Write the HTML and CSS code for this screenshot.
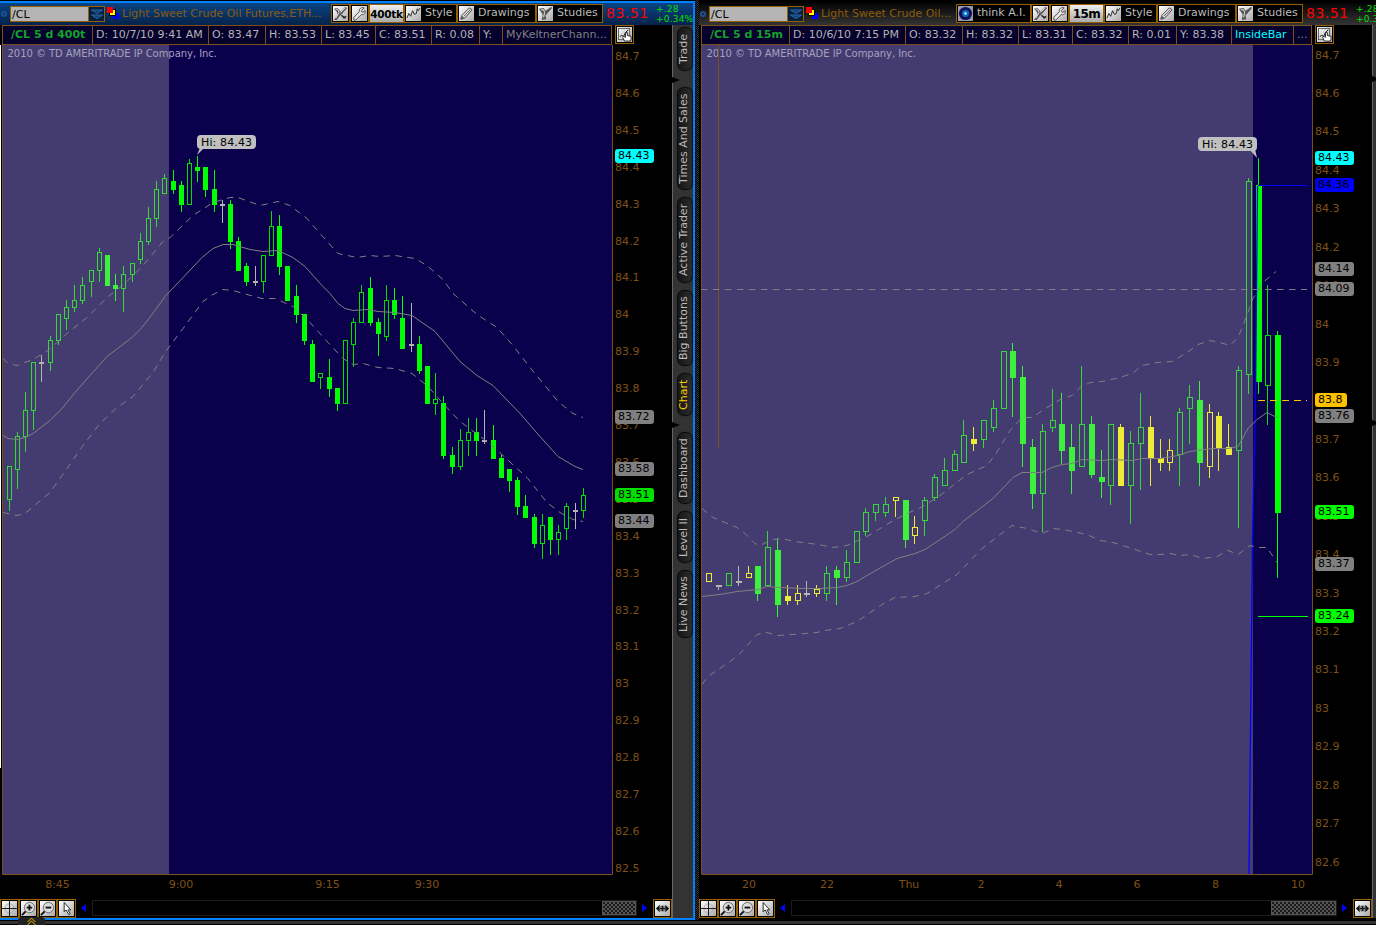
FILE: index.html
```html
<!DOCTYPE html>
<html lang="en">
<head>
    <meta charset="UTF-8">
    <title>Charts</title>
    <link rel="stylesheet" href="styles.css">
    <script src="main.js"></script>
</head>
<body onload="drawCharts()">

<svg class="symbols">
    <defs>
        <linearGradient id="silver" x1="0" y1="0" x2="1" y2="1">
            <stop offset="0" stop-color="#fff"/>
            <stop offset="1" stop-color="#aaa"/>
        </linearGradient>
        <symbol id="tools" viewBox="0 0 16 16">
            <rect width="16" height="16" fill="url(#silver)"/>
            <path d="M1 3l4-1 3 4 5-5 2 1-5 6-3 3-3 4-3 0 4-6-1-3z" fill="#555"/>
            <path d="M3 3.500l2 0 1.500 3.500-3.500 6M8 7l5-5" stroke="#e8e8e8" fill="none"/>
            <path d="M9 10l4 3M11 13l3-2" stroke="#222" stroke-width="1.500"/>
        </symbol>
        <symbol id="wrench" viewBox="0 0 16 16">
            <rect width="16" height="16" fill="url(#silver)"/>
            <path d="M2 12l6-6c-1-3 2-5 5-4l-3 3 1 2 3-2c1 3-2 5-4 4l-6 6-2 0z" fill="#e8e8e8" stroke="#444"/>
        </symbol>
        <symbol id="style" viewBox="0 0 16 16">
            <rect width="16" height="16" fill="url(#silver)"/>
            <path d="M1 13l2-5 2 3 2-6 2 4 2-1 1-5 1 2 2-3" fill="none" stroke="#222"/>
        </symbol>
        <symbol id="pencil" viewBox="0 0 16 16">
            <rect width="16" height="16" fill="url(#silver)"/>
            <path d="M2 14l1-4 8-8 3 2-8 9z" fill="#ddd" stroke="#444"/>
            <path d="M2 14l1-3 2 2zM5 11l7-7" fill="#222" stroke="#666"/>
        </symbol>
        <symbol id="studies" viewBox="0 0 16 16">
            <rect width="16" height="16" fill="url(#silver)"/>
            <path d="M1 3l5-1 2 3 6-4 1 1-5 6-2 2 1 4-5 1 1-6-2-3z" fill="#555"/>
            <path d="M3 4l3 0 1 3-1 5" stroke="#eee" fill="none"/>
        </symbol>
        <symbol id="hand" viewBox="0 0 16 16">
            <rect width="16" height="16" fill="url(#silver)"/>
            <rect x="1.500" y="1.500" width="12" height="12" fill="none" stroke="#555"/>
            <path d="M3 10l2-1 2 1 2-4 3-3" fill="none" stroke="#111"/>
            <path d="M8 15l-2-4 1-1 2 1 0-5 2 0 0 3 4 1 0 3-1 2z" fill="#fff" stroke="#222"/>
        </symbol>
        <symbol id="think" viewBox="0 0 16 16">
            <rect width="16" height="16" fill="#99a"/>
            <circle cx="8" cy="8" r="7" fill="#0a1460"/>
            <circle cx="8" cy="8" r="4.500" fill="#2858b8" stroke="#06093a"/>
            <circle cx="8" cy="8" r="1.500" fill="#5ff"/>
        </symbol>
        <symbol id="cross" viewBox="0 0 16 16">
            <rect width="16" height="16" fill="url(#silver)"/>
            <circle cx="8" cy="8" r="5" fill="none" stroke="#aaa"/>
            <path d="M0 8h16M8 0v16" stroke="#111"/>
        </symbol>
        <symbol id="zoomin" viewBox="0 0 16 16">
            <rect width="16" height="16" fill="url(#silver)"/>
            <circle cx="9" cy="7" r="5.500" fill="#ddd" stroke="#666"/>
            <path d="M1 15l4-4" stroke="#111" stroke-width="2"/>
            <path d="M6 7h6M9 4v6" stroke="#111" stroke-width="2"/>
        </symbol>
        <symbol id="zoomout" viewBox="0 0 16 16">
            <rect width="16" height="16" fill="url(#silver)"/>
            <circle cx="9" cy="7" r="5.500" fill="#ddd" stroke="#666"/>
            <path d="M1 15l4-4" stroke="#111" stroke-width="2"/>
            <path d="M6 7h6" stroke="#111" stroke-width="2"/>
        </symbol>
        <symbol id="arrow" viewBox="0 0 16 16">
            <rect width="16" height="16" fill="url(#silver)"/>
            <path d="M5.500 1.500v10l2-2 3 5 1.500-1-2.500-4h3z" fill="#fff" stroke="#222"/>
        </symbol>
        <symbol id="expand" viewBox="0 0 16 16">
            <rect width="16" height="16" fill="url(#silver)"/>
            <path d="M1 8l4-4v8zM15 8l-4-4v8z" fill="#111"/>
            <path d="M5 8h6M6.500 5v6M8 5v6M9.500 5v6" stroke="#111"/>
        </symbol>
        <symbol id="link" viewBox="0 0 12 12">
            <path d="M6 6h6v6h-6z" fill="#00f"/>
            <path d="M2.500 2.500h6v6h-6z" fill="#ff0" stroke="#000"/>
            <path d="M0 0h6v6h-6z" fill="#f00"/>
        </symbol>
        <symbol id="drop" viewBox="0 0 14 14">
            <path d="M2 3h11L7.500 6.500zM2 8h11L7.500 11.500z" fill="#123f72" stroke="#2a68a8"/>
        </symbol>
    </defs>
</svg>

<div class="desktop">
    <div class="window active">
        <div class="toolbar">
            <span class="dot"></span>
            <span class="symbol">/CL</span>
            <svg class="drop"><use href="#drop"/></svg>
            <svg class="link"><use href="#link"/></svg>
            <span class="name">Light Sweet Crude Oil Futures,ETH...</span>
            <svg class="icon"><use href="#tools"/></svg>
            <svg class="icon"><use href="#wrench"/></svg>
            <span class="period">400tk</span>
            <span class="button style"><svg><use href="#style"/></svg>Style</span>
            <span class="button drawings"><svg><use href="#pencil"/></svg>Drawings</span>
            <span class="button studies"><svg><use href="#studies"/></svg>Studies</span>
            <span class="last">83.51</span>
            <span class="change">+.28<br>+0.34%</span>
        </div>
        <div class="content">
            <div class="main">
                <div class="info">
                    <span class="cell title" style="width: 90px">/CL 5 d 400t</span>
                    <span class="cell" style="width: 116px">D: 10/7/10 9:41 AM</span>
                    <span class="cell" style="width: 57px">O: 83.47</span>
                    <span class="cell" style="width: 56px">H: 83.53</span>
                    <span class="cell" style="width: 54px">L: 83.45</span>
                    <span class="cell" style="width: 56px">C: 83.51</span>
                    <span class="cell" style="width: 48px">R: 0.08</span>
                    <span class="cell" style="width: 23px">Y:</span>
                    <span class="cell study" style="width: 110px">MyKeltnerChann...</span>
                    <svg class="hand"><use href="#hand"/></svg>
                </div>
                <svg class="chart" id="ticks" viewBox="0 45 672 853"></svg>
                <div class="scroll">
                    <svg class="tool"><use href="#cross"/></svg>
                    <svg class="tool"><use href="#zoomin"/></svg>
                    <svg class="tool"><use href="#zoomout"/></svg>
                    <svg class="tool"><use href="#arrow"/></svg>
                    <span class="left"></span>
                    <div class="track"><div class="thumb" style="width: 34px"></div></div>
                    <span class="right"></span>
                    <svg class="tool"><use href="#expand"/></svg>
                </div>
            </div>
            <div class="tabs">
                <div class="tab" style="height: 44px">Trade</div>
                <i class="notch"></i>
                <div class="tab" style="height: 103px">Times And Sales</div>
                <div class="tab" style="height: 86px">Active Trader</div>
                <div class="tab" style="height: 76px">Big Buttons</div>
                <div class="tab chosen" style="height: 43px">Chart</div>
                <i class="notch"></i>
                <div class="tab" style="height: 72px">Dashboard</div>
                <div class="tab" style="height: 52px">Level II</div>
                <div class="tab" style="height: 68px">Live News</div>
            </div>
        </div>
    </div>
    <div class="splitter"></div>
    <div class="window">
        <div class="toolbar">
            <span class="dot"></span>
            <span class="symbol">/CL</span>
            <svg class="drop"><use href="#drop"/></svg>
            <svg class="link"><use href="#link"/></svg>
            <span class="name">Light Sweet Crude Oil...</span>
            <span class="button ai"><svg><use href="#think"/></svg>think A.I.</span>
            <svg class="icon"><use href="#tools"/></svg>
            <svg class="icon"><use href="#wrench"/></svg>
            <span class="period wide">15m</span>
            <span class="button style"><svg><use href="#style"/></svg>Style</span>
            <span class="button drawings"><svg><use href="#pencil"/></svg>Drawings</span>
            <span class="button studies"><svg><use href="#studies"/></svg>Studies</span>
            <span class="last">83.51</span>
            <span class="change">+.28<br>+0.34%</span>
        </div>
        <div class="content">
            <div class="main">
                <div class="info">
                    <span class="cell title" style="width: 88px">/CL 5 d 15m</span>
                    <span class="cell" style="width: 116px">D: 10/6/10 7:15 PM</span>
                    <span class="cell" style="width: 57px">O: 83.32</span>
                    <span class="cell" style="width: 56px">H: 83.32</span>
                    <span class="cell" style="width: 54px">L: 83.31</span>
                    <span class="cell" style="width: 56px">C: 83.32</span>
                    <span class="cell" style="width: 48px">R: 0.01</span>
                    <span class="cell" style="width: 55px">Y: 83.38</span>
                    <span class="cell inside" style="width: 62px">InsideBar</span>
                    <span class="cell study" style="width: 19px">...</span>
                    <svg class="hand"><use href="#hand"/></svg>
                </div>
                <svg class="chart" id="minutes" viewBox="699 45 673 853"></svg>
                <div class="scroll">
                    <svg class="tool"><use href="#cross"/></svg>
                    <svg class="tool"><use href="#zoomin"/></svg>
                    <svg class="tool"><use href="#zoomout"/></svg>
                    <svg class="tool"><use href="#arrow"/></svg>
                    <span class="left"></span>
                    <div class="track"><div class="thumb" style="width: 65px"></div></div>
                    <span class="right"></span>
                    <svg class="tool"><use href="#expand"/></svg>
                </div>
            </div>
            <div class="tabs">
                <div class="spacer" style="height: 50px"></div>
                <i class="notch"></i>
                <div class="spacer" style="height: 335px"></div>
                <i class="notch"></i>
            </div>
        </div>
    </div>
</div>
<div class="footer"></div>
<div class="drawer"><svg viewBox="0 0 28 8"><path d="M10 5l4-4 4 4M10 8l4-4 4 4" fill="none" stroke="#fc0"/></svg></div>

</body>
</html>
```
FILE: styles.css
```css
body {
    margin: 0;
    width: 1376px;
    height: 925px;
    overflow: hidden;
    background: #000;
    color: #bbb;
    font: 11px "DejaVu Sans", sans-serif;
    white-space: nowrap;
}
.symbols {
    position: absolute;
    width: 0;
    height: 0;
}
.desktop {
    display: flex;
    height: 920px;
}
.window {
    box-sizing: border-box;
    width: 677px;
    flex: none;
    padding-top: 3px;
    overflow: hidden;
}
.window.active {
    width: 695px;
    margin-top: 1px;
    padding-top: 0;
    border: 2px solid #0080ff;
    border-left: 0;
    height: 919px;
}
.splitter {
    width: 4px;
    background: repeating-conic-gradient(#333 0 25%, #000 0 50%) 0 0 / 2px 2px;
}

/* toolbar */
.toolbar {
    box-sizing: border-box;
    display: flex;
    align-items: flex-start;
    width: 694px;
    height: 22px;
    padding-top: 1px;
    background: linear-gradient(#050505, #343434);
}
.active .toolbar {
    width: 693px;
    background: linear-gradient(#0a4484, #06234a);
}
.dot {
    box-sizing: border-box;
    flex: none;
    width: 6px;
    height: 6px;
    margin: 7px 3px 0 1px;
    border: 2px solid #1c4f8f;
    border-radius: 50%;
}
.symbol {
    box-sizing: border-box;
    flex: none;
    width: 79px;
    height: 16px;
    margin-top: 2px;
    padding-left: 1px;
    border: 1px solid #965f00;
    background: #b4b4b4;
    color: #000;
    line-height: 15px;
}
.drop {
    box-sizing: border-box;
    flex: none;
    width: 16px;
    height: 16px;
    margin: 2px 2px 0 0;
    border: 1px solid #965f00;
    border-left: 0;
    background: #06203e;
}
.link {
    flex: none;
    width: 12px;
    height: 12px;
    margin-top: 3px;
}
.name {
    flex: 1;
    padding-left: 3px;
    color: #8e5b0c;
    line-height: 19px;
}
.icon, .button, .period {
    box-sizing: border-box;
    flex: none;
    height: 19px;
    border: 1px solid #965f00;
    background: #000;
}
.icon {
    width: 19px;
    padding: 1px;
}
.period {
    width: 35px;
    background: linear-gradient(#eee, #aaa);
    color: #000;
    font-size: 10.5px;
    font-weight: bold;
    letter-spacing: -.3px;
    text-align: center;
    line-height: 18px;
}
.wide {
    font-size: 12px;
    letter-spacing: -.5px;
}
.button {
    display: flex;
    gap: 4px;
    padding-left: 1px;
    line-height: 15px;
}
.button svg {
    width: 15px;
    height: 15px;
    margin-top: 1px;
}
.style { width: 53px; }
.drawings { width: 79px; }
.studies { width: 67px; }
.ai { width: 75px; }
.last {
    flex: none;
    width: 50px;
    margin-left: 3px;
    color: #f00;
    font-size: 14px;
    line-height: 18px;
    letter-spacing: .5px;
}
.change {
    flex: none;
    width: 37px;
    color: #00e000;
    font-size: 9px;
    line-height: 10px;
    letter-spacing: .2px;
}

/* chart column */
.content {
    display: flex;
}
.main {
    width: 672px;
    flex: none;
}
.window:not(.active) .main {
    width: 673px;
}
.info {
    display: flex;
    height: 20px;
    padding-left: 2px;
}
.cell {
    box-sizing: border-box;
    height: 20px;
    padding-left: 3px;
    border: 1px solid #7a4f1c;
    border-right: 0;
    background: #05002c;
    color: #b4b4b4;
    line-height: 17px;
    overflow: hidden;
}
.title {
    padding-left: 8px;
    color: #15a02b;
    font-weight: bold;
}
.study {
    color: #808080;
}
.inside {
    color: #00ffff;
}
.hand {
    box-sizing: border-box;
    width: 19px;
    height: 19px;
    margin-left: 4px;
    padding: 1px;
    border: 1px solid #965f00;
}
.cell:nth-last-child(2) {
    border-right: 1px solid #7a4f1c;
    margin-right: -1px;
}
.chart {
    display: block;
    width: 100%;
    height: 853px;
}
.scroll {
    display: flex;
    align-items: center;
    height: 20px;
}
.tool {
    box-sizing: border-box;
    flex: none;
    width: 19px;
    height: 19px;
    padding: 1px;
    border: 1px solid #965f00;
}
.left, .right {
    border: 4px solid transparent;
}
.left {
    margin: 0 6px 0 1px;
    border-right: 5px solid #00f;
}
.right {
    margin: 0 2px 0 5px;
    border-left: 5px solid #00f;
}
.track {
    box-sizing: border-box;
    flex: 1;
    height: 16px;
    border: 1px solid #1c1c1c;
}
.thumb {
    box-sizing: border-box;
    height: 14px;
    margin-left: auto;
    border: 1px solid #555;
    background: repeating-conic-gradient(#555 0 25%, #1a1a1a 0 50%) 0 0 / 4px 4px;
}

/* chart svg */
.chart text { font-size: 11px; }
.axis { fill: #7f5119; }
.frame { fill: none; stroke: #7a4f1c; }
.copy { fill: #a6a1bd; }
.band { fill: none; stroke: #808080; }
.dashed { stroke-dasharray: 6.5 5.5; }

/* gadget tabs */
.tabs {
    box-sizing: border-box;
    width: 21px;
    height: 893px;
    padding: 2px 0 0 4px;
    border-left: 1px solid #666;
    background: #333;
    flex: none;
}
.tab {
    box-sizing: border-box;
    width: 16px;
    margin-bottom: 7px;
    border: 1px solid #0c0c0c;
    border-radius: 7px;
    background: linear-gradient(90deg, #2c2c2c, #161616);
    box-shadow: 0 0 1px #000;
    line-height: 12px;
    text-align: center;
    writing-mode: vertical-rl;
    transform: rotate(180deg);
}
.chosen {
    color: #fc0;
}
.notch {
    display: block;
    width: 0;
    margin: -1px 0 4px -5px;
    border: 3px solid transparent;
    border-left: 8px solid #000;
    border-right: 0;
}

.footer {
    height: 3px;
    margin-top: 1px;
    background: #333;
}
.drawer {
    position: absolute;
    left: 18px;
    top: 917px;
    width: 27px;
    height: 8px;
    border-radius: 4px 4px 0 0;
    background: #222;
}
.drawer svg {
    display: block;
    width: 27px;
    height: 8px;
}
```
FILE: main.js
```javascript
// candle: left, high, open/close top, open/close bottom, low, kind
// kinds: h hollow, f filled, d doji, y yellow hollow, Y yellow filled
let ticks = `7,466,466,500,511,h 15,432,436,470,489,h 23,392,410,437,452,h 31,362,362,411,430,h 39,355,362,364,382,d
48,336,340,363,371,h 56,314,314,341,345,h 64,300,307,319,330,h 72,285,300,308,312,h 80,277,285,301,304,h
89,270,270,282,297,h 97,248,252,271,282,h 105,255,255,286,286,f 113,274,285,289,301,f 121,266,274,289,312,h
130,263,263,275,282,h 138,233,241,260,264,h 146,207,218,242,245,h 154,181,189,219,227,h 162,174,178,194,194,h
171,170,181,190,194,f 179,181,185,205,212,f 187,159,163,205,205,h 195,156,167,171,182,f 203,167,167,190,197,f
212,170,189,205,212,f 220,200,204,206,223,d 228,200,204,242,249,f 236,237,241,271,271,f 244,263,266,282,286,f
253,266,281,283,286,d 261,255,255,282,293,h 269,211,226,256,256,h 277,215,226,267,275,f 285,266,266,301,301,f
294,285,296,315,323,f 302,314,314,341,345,f 310,340,344,382,382,f 318,373,373,378,389,h 327,359,377,389,397,f
335,388,388,404,411,f 343,340,340,404,404,h 351,318,322,345,367,h 359,285,292,323,323,h 368,277,288,323,326,f
376,318,322,334,356,f 384,285,300,337,341,h 392,288,300,315,319,f 400,296,318,349,349,f 409,303,344,346,352,d
417,336,344,371,374,f 425,366,366,404,404,f 433,373,399,404,415,h 441,396,403,456,459,f 450,447,455,467,474,f
458,429,440,467,470,h 466,418,432,441,456,h 474,418,432,441,456,f 482,410,440,442,444,d 491,425,440,459,459,f
499,455,458,478,478,f 507,469,469,481,492,f 515,477,480,507,515,f 523,495,506,518,518,f 532,514,517,544,548,f
540,514,525,544,559,h 548,517,517,540,555,f 556,525,532,540,555,h 564,503,506,529,540,h 573,503,510,512,529,d
581,488,495,511,518,h`;

let minutes = `706,573,573,582,582,y 716,585,585,587,590,d 726,573,573,586,586,h 736,566,581,583,586,d 746,566,573,578,578,y
755,566,566,594,601,f 765,531,547,586,586,h 775,539,550,605,617,f 785,585,596,601,605,Y 795,585,593,601,605,y
804,581,593,595,597,d 814,585,589,594,597,y 824,566,573,594,601,h 834,566,570,578,605,f 844,550,562,578,582,h
854,531,531,563,563,h 863,508,512,532,536,h 873,504,504,513,521,h 883,497,504,513,517,h 893,497,497,501,517,y
903,500,500,540,548,f 912,516,527,536,544,y 922,497,500,521,536,h 932,474,477,498,501,h 942,458,470,486,486,h
952,450,454,471,471,h 961,420,435,463,463,h 971,427,439,444,451,Y 981,420,420,440,448,h 991,400,408,428,432,h
1001,351,351,409,409,h 1010,343,351,378,417,f 1020,366,377,444,467,f 1030,439,447,494,509,f 1040,424,431,494,532,h
1050,389,420,428,432,h 1059,393,424,451,464,f 1069,424,447,471,494,f 1079,366,424,467,467,h 1089,416,424,475,478,f
1099,450,477,482,498,f 1108,424,424,486,505,h 1118,424,427,486,486,Y 1128,431,443,486,524,h 1138,393,427,444,490,h
1148,416,427,459,486,Y 1158,439,458,463,471,Y 1167,439,450,463,471,y 1177,408,412,455,486,h 1187,385,397,409,444,h
1197,381,400,463,486,f 1207,404,412,467,478,y 1216,412,416,449,471,Y 1226,424,447,455,455,Y 1236,366,370,451,528,h
1246,178,181,375,394,h 1256,158,185,382,394,f 1265,285,335,386,425,h 1275,331,335,513,578,f`;

let tickBands = [
	"3,358 8,363 17,365 33,359 48,350 67,333 87,317 107,297 125,283 143,265 163,241 170,237 193,215 213,202 230,197 238,197 260,205 278,201 290,205 307,218 320,233 338,253 357,257 370,255 380,256 395,255 415,258 427,265 443,279 453,293 477,314 497,327 513,345 530,367 558,401 573,413 583,417",
	"3,435 8,438 17,439 25,437 33,433 50,420 62,408 75,392 90,375 107,356 132,337 142,327 155,310 165,296 183,277 202,257 213,248 223,244 233,244 250,249 263,251 278,250 293,257 305,266 322,285 330,293 338,303 345,308 353,310 368,309 378,311 395,312 412,315 435,331 460,361 477,375 493,385 520,413 540,436 558,456 575,466 583,469",
	"3,512 17,515 25,513 50,492 67,468 83,445 100,423 117,407 133,396 153,372 165,352 183,328 203,301 213,294 223,289 233,290 247,294 262,298 275,298 293,306 310,322 328,342 343,358 353,364 363,363 378,367 395,368 412,373 428,386 443,403 460,421 487,441 503,455 517,468 527,477 547,502 560,512 573,519 583,521"
];

let minuteBands = [
	"702,508 713,517 737,527 745,533 755,543 760,545 772,539 780,538 795,541 818,544 833,547 847,545 867,536 890,522 907,513 923,506 940,495 967,474 987,465 996,453 1010,430 1022,417 1032,417 1047,407 1062,398 1072,395 1080,387 1090,382 1102,381 1120,377 1132,373 1142,365 1157,362 1172,361 1187,352 1198,344 1210,340 1220,342 1230,345 1238,337 1245,320 1253,298 1263,282 1276,271",
	"702,596 720,594 737,591 748,590 758,589 767,586 780,587 803,588 820,588 837,587 847,585 857,581 867,575 897,558 915,553 925,549 955,529 963,521 993,498 1013,477 1022,472 1042,472 1052,467 1062,464 1072,463 1082,459 1102,460 1112,459 1132,460 1142,458 1160,458 1178,455 1190,451 1212,448 1228,448 1238,446 1248,428 1257,419 1267,412 1277,417",
	"702,684 708,676 730,661 740,653 757,634 767,632 778,635 793,634 817,632 825,630 840,628 857,621 882,604 895,597 915,596 927,593 957,574 982,548 1012,525 1027,528 1042,533 1053,528 1063,529 1087,534 1100,540 1113,542 1132,548 1150,554 1160,554 1170,553 1180,555 1190,554 1203,558 1217,556 1228,550 1238,554 1250,545 1258,547 1267,547 1277,562"
];

function text(x, y, value, extra) {
	return `<text x="${x}" y="${y}" ${extra}>${value}</text>`;
}

function rect(x, y, w, h, fill) {
	return `<rect x="${x}" y="${y}" width="${w}" height="${h}" fill="${fill}"/>`;
}

function drawCandles(list, width, night) {
	let out = "";
	for (let item of list.split(/\s+/)) {
		let [x, high, top, bottom, low, kind] = item.split(",");
		x = +x; high = +high; top = +top; bottom = +bottom; low = +low;
		let dim = x < night;
		let color = dim ? "#3cf03c" : "#00ff00";
		if (kind === "h") color = dim ? "#36d838" : "#00e000";
		if (kind === "d") color = "#b4b4b4";
		if (kind === "y" || kind === "Y") color = "#ecec38";
		out += rect(x + 2, high, 1, top - high, color) + rect(x + 2, bottom, 1, low - bottom, color);
		if (kind === "h" || kind === "y") {
			out += `<rect x="${x + 0.5}" y="${top + 0.5}" width="${width - 1}" height="${bottom - top - 1}" fill="none" stroke="${color}"/>`;
		} else {
			out += rect(x, top, width, bottom - top, color);
		}
	}
	return out;
}

function drawBands(bands) {
	return bands.map((points, i) => `<polyline class="band ${i === 1 ? "" : "dashed"}" points="${points}" transform="translate(0 .5)"/>`).join("");
}

function drawBackground(left, split, right) {
	return rect(left, 45, split - left, 829, "#443c71") + rect(split, 45, right - split, 829, "#0a004c") +
		`<path class="frame" d="M${left - 0.5} 45V874.500H${right + 0.5}V45"/>`;
}

function drawPrices(x, y, step, last) {
	let out = "";
	for (let i = 0, p = 847; p >= last; p--, i++) {
		out += text(x, Math.round(y + i * step) + 4, p / 10, 'class="axis"');
	}
	return out;
}

function drawTimes(times) {
	return times.map(t => text(t[0], 888, t[1], 'class="axis" text-anchor="middle"')).join("");
}

function drawTags(x, tags) {
	return tags.map(([y, value, fill]) =>
		`<rect x="${x}" y="${y - 7}" width="${value.length > 4 ? 39 : 32}" height="14" rx="3" fill="${fill}"/>` +
		text(x + 3, y + 3, value, 'fill="#000"')).join("");
}

function drawHigh(x, y, tip) {
	return `<path d="${tip}" fill="#c0c0c0"/><rect x="${x}" y="${y}" width="59" height="14" rx="4" fill="#c0c0c0"/>` +
		text(x + 4, y + 11, "Hi: 84.43", 'fill="#000" textLength="51"');
}

function drawCharts() {
	document.getElementById("ticks").innerHTML =
		drawBackground(3, 169, 612) +
		rect(0, 45, 1, 723, "#fff") +
		text(7.5, 57, "2010 © TD AMERITRADE IP Company, Inc.", 'class="copy" style="font-size: 10px" textLength="209.500"') +
		drawCandles(ticks, 5, 169) +
		drawBands(tickBands) +
		drawHigh(197, 135, "M200 148l-3 7 7-7z") +
		drawPrices(615, 56, 36.9, 825) +
		drawTimes([[57.5, "8:45"], [181, "9:00"], [327.5, "9:15"], [427, "9:30"]]) +
		drawTags(615, [[156, "84.43", "#00ffff"], [417, "83.72", "#808080"], [469, "83.58", "#808080"],
			[495, "83.51", "#00e000"], [521, "83.44", "#808080"]]);

	document.getElementById("minutes").innerHTML =
		drawBackground(702, 1253, 1312) +
		text(706.5, 57, "2010 © TD AMERITRADE IP Company, Inc.", 'class="copy" style="font-size: 10px" textLength="209.500"') +
		rect(718, 45, 1, 403, "#7a4f1c") +
		drawCandles(minutes, 6, 1253) +
		'<path d="M1257.500 186L1255.500 400 1252.500 540 1249 874" fill="none" stroke="#0000ff" stroke-width="1.300"/>' +
		rect(1258, 185, 50, 1, "#0000ff") +
		'<path class="band" stroke-dasharray="6.500 5.500" d="M701 289.500H1307"/>' +
		'<path stroke="#ffc000" stroke-dasharray="7 5" d="M1258 400.500H1307"/>' +
		rect(1258, 616, 50, 1, "#00ff00") +
		drawBands(minuteBands) +
		drawHigh(1198, 137, "M1250 150l7 8-2-9z") +
		drawPrices(1315, 54.6, 38.43, 826) +
		drawTimes([[749, "20"], [827, "22"], [909, "Thu"], [981, "2"], [1059, "4"], [1137, "6"], [1215.5, "8"], [1298, "10"]]) +
		drawTags(1315, [[158, "84.43", "#00ffff"], [185, "84.36", "#0000ff"], [269, "84.14", "#808080"],
			[289, "84.09", "#808080"], [400, "83.8", "#ffc000"], [416, "83.76", "#808080"],
			[512, "83.51", "#00ff00"], [564, "83.37", "#808080"], [616, "83.24", "#00ff00"]]);
}
```
